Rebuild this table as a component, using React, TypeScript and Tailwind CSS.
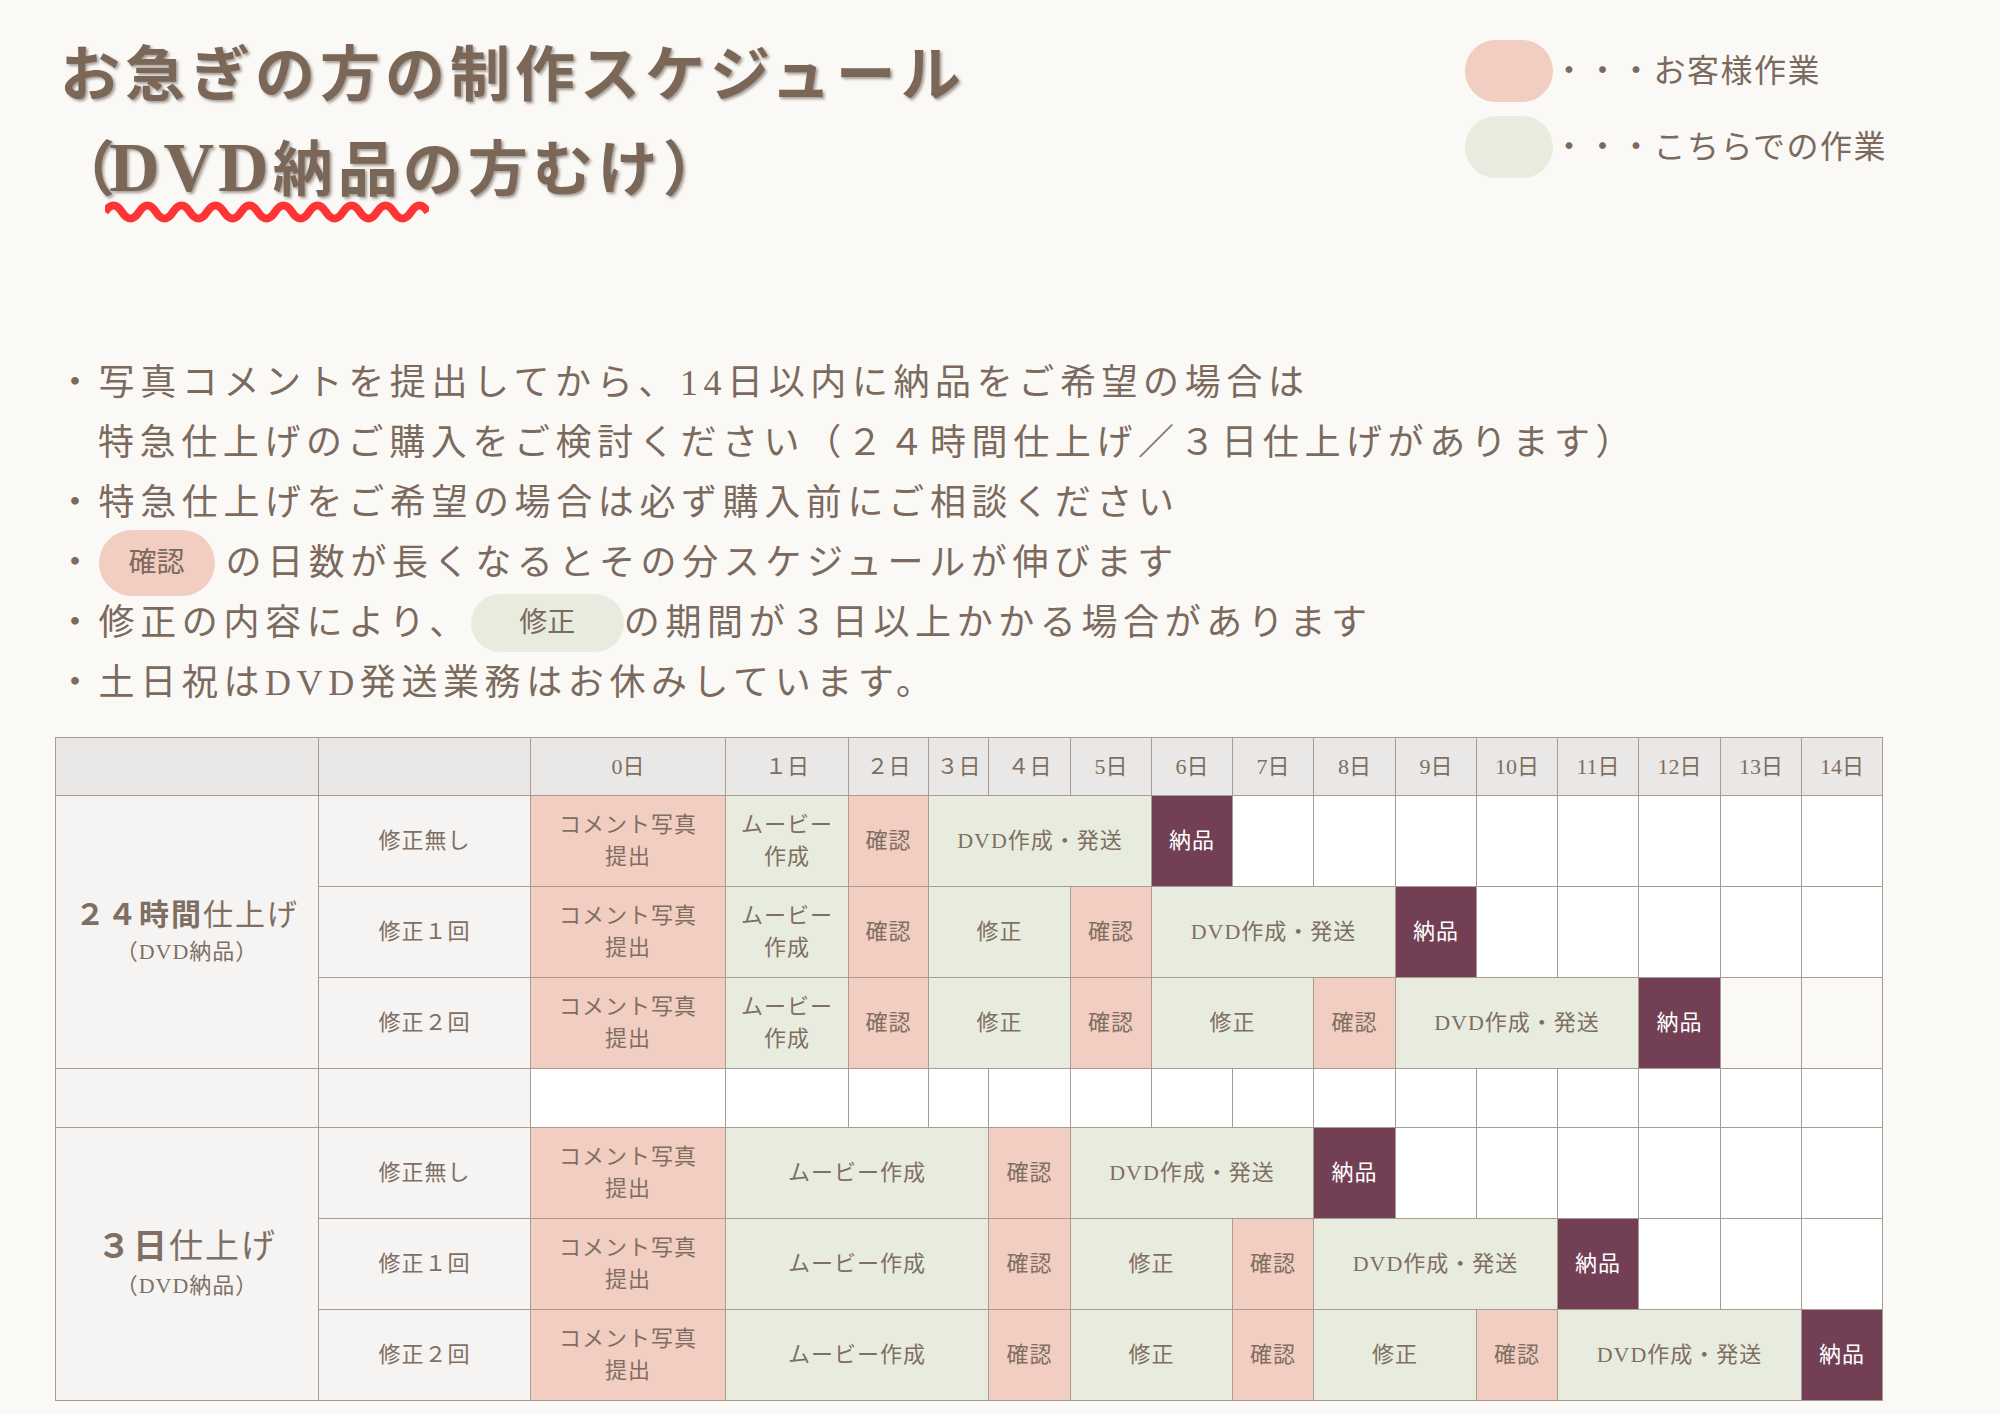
import React from "react";

type Kind = "p" | "g" | "n" | "w" | "t";
type Cell = { k: Kind; span?: number; text?: string[] };

const FONT = "font-['Liberation_Serif','Noto_Sans_CJK_JP',serif]";

const kindClass: Record<Kind, string> = {
  p: "bg-[#f2cdc1] text-[#7f6e62]",
  g: "bg-[#e8ecde] text-[#7f6e62]",
  n: "bg-[#723f54] text-white",
  w: "bg-white",
  t: "bg-transparent",
};

const comment: Cell = { k: "p", text: ["コメント写真", "提出"] };
const movieShort: Cell = { k: "g", text: ["ムービー", "作成"] };
const movieLong: Cell = { k: "g", span: 3, text: ["ムービー作成"] };
const kakunin: Cell = { k: "p", text: ["確認"] };
const shusei: Cell = { k: "g", span: 2, text: ["修正"] };
const nohin: Cell = { k: "n", text: ["納品"] };
const dvd: Cell = { k: "g", span: 3, text: ["DVD作成・発送"] };
const blanks = (n: number, k: Kind = "w"): Cell[] =>
  Array.from({ length: n }, () => ({ k }));

const rows24: [string, Cell[]][] = [
  ["修正無し", [comment, movieShort, kakunin, dvd, nohin, ...blanks(8)]],
  ["修正１回", [comment, movieShort, kakunin, shusei, kakunin, dvd, nohin, ...blanks(5)]],
  [
    "修正２回",
    [comment, movieShort, kakunin, shusei, kakunin, shusei, kakunin, dvd, nohin, ...blanks(2, "t")],
  ],
];

const rows3: [string, Cell[]][] = [
  ["修正無し", [comment, movieLong, kakunin, dvd, nohin, ...blanks(6)]],
  ["修正１回", [comment, movieLong, kakunin, shusei, kakunin, dvd, nohin, ...blanks(3)]],
  ["修正２回", [comment, movieLong, kakunin, shusei, kakunin, shusei, kakunin, dvd, nohin]],
];

const days = ["0日", "１日", "２日", "３日", "４日", "5日", "6日", "7日", "8日", "9日", "10日", "11日", "12日", "13日", "14日"];
const colWidths = [263, 212, 195, 123, 80, 60, 82, 81, 81, 81, 82, 81, 81, 81, 82, 81, 81];

function wavePath() {
  const half = 17;
  let d = "M0 12 Q8.5 -1 17 12";
  for (let x = 2 * half; x <= 330; x += half) d += ` T${x} 12`;
  return d;
}

function Title() {
  return (
    <div className="w-[1405px] shrink-0 pt-[30px] font-bold text-[60px] leading-[92px] tracking-[5px] text-[#7a6757] [text-shadow:2px_2px_3px_rgba(60,40,30,0.45)]">
      <div>お急ぎの方の制作スケジュール</div>
      <div className="whitespace-nowrap -ml-[5px]">
        <span className="tracking-[-6px]">（</span>
        <span className="relative inline-block">
          <span className="text-[70px] tracking-[4px]">DVD</span>納品
          <svg
            className="absolute left-[-4px] top-[78px]"
            width="324"
            height="24"
            viewBox="0 0 324 24"
          >
            <path d={wavePath()} fill="none" stroke="#ff3535" strokeWidth="8" />
          </svg>
        </span>
        の方むけ）
      </div>
    </div>
  );
}

function Legend() {
  return (
    <div className="flex flex-col gap-[14px] pt-[40px]">
      <div className="flex items-center h-[62px]">
        <div className="w-[88px] h-[62px] rounded-[31px] bg-[#f2cdc1]" />
        <span className="text-[32px] tracking-[1.5px] leading-none">・・・お客様作業</span>
      </div>
      <div className="flex items-center h-[62px]">
        <div className="w-[88px] h-[62px] rounded-[31px] bg-[#e8ecde]" />
        <span className="text-[32px] tracking-[1.5px] leading-none">・・・こちらでの作業</span>
      </div>
    </div>
  );
}

function Bullets() {
  const line = "flex items-center h-[60px] whitespace-nowrap";
  return (
    <div className="mt-[136px] pl-[57px] text-[36px] tracking-[5.6px]">
      <div className={line}>・写真コメントを提出してから、14日以内に納品をご希望の場合は</div>
      <div className={line + " pl-[41px]"}>
        特急仕上げのご購入をご検討ください（２４時間仕上げ／３日仕上げがあります）
      </div>
      <div className={line}>・特急仕上げをご希望の場合は必ず購入前にご相談ください</div>
      <div className={line}>
        <span>・</span>
        <span className="flex items-center justify-center w-[116px] h-[66px] shrink-0 rounded-full bg-[#f2cdc1] text-[28px] tracking-normal">
          確認
        </span>
        <span className="ml-[11px]">の日数が長くなるとその分スケジュールが伸びます</span>
      </div>
      <div className={line}>
        <span>・修正の内容により、</span>
        <span className="flex items-center justify-center w-[153px] h-[58px] shrink-0 rounded-full bg-[#e8ecde] text-[28px] tracking-normal">
          修正
        </span>
        <span>の期間が３日以上かかる場合があります</span>
      </div>
      <div className={line}>・土日祝はDVD発送業務はお休みしています。</div>
    </div>
  );
}

function GroupRows({ title, rows }: { title: React.ReactNode; rows: [string, Cell[]][] }) {
  return (
    <>
      {rows.map(([label, cells], i) => (
        <tr key={label} className="h-[91px]">
          {i === 0 && (
            <td rowSpan={3} className="border border-[#a89b92] bg-[#f5f4f2] text-center align-middle">
              {title}
            </td>
          )}
          <td className="border border-[#a89b92] bg-[#f5f4f2] text-center">{label}</td>
          {cells.map((c, j) => (
            <td
              key={j}
              colSpan={c.span}
              className={"border border-[#a89b92] text-center " + kindClass[c.k]}
            >
              {c.text?.map((t) => (
                <div key={t}>{t}</div>
              ))}
            </td>
          ))}
        </tr>
      ))}
    </>
  );
}

function ScheduleTable() {
  return (
    <table className="mt-[24px] ml-[55px] w-[1828px] table-fixed border-collapse text-[22px] leading-[32px] tracking-[1px] text-[#7f6e62]">
      <colgroup>
        {colWidths.map((w, i) => (
          <col key={i} style={{ width: w }} />
        ))}
      </colgroup>
      <tbody>
        <tr className="h-[58px] bg-[#e9e8e6]">
          <td className="border border-[#a89b92]" />
          <td className="border border-[#a89b92]" />
          {days.map((d) => (
            <td key={d} className="border border-[#a89b92] text-center tracking-normal">
              {d}
            </td>
          ))}
        </tr>
        <GroupRows
          title={
            <div>
              <div className="text-[30px] leading-[40px] tracking-[2px]">
                <span className="font-bold">２４時間</span>仕上げ
              </div>
              <div className="text-[22px] leading-[34px]">（DVD納品）</div>
            </div>
          }
          rows={rows24}
        />
        <tr className="h-[59px]">
          <td className="border border-[#a89b92] bg-[#f5f4f2]" />
          <td className="border border-[#a89b92] bg-[#f5f4f2]" />
          {days.map((d) => (
            <td key={d} className="border border-[#a89b92] bg-white" />
          ))}
        </tr>
        <GroupRows
          title={
            <div>
              <div className="text-[34px] leading-[44px] tracking-[2px]">
                <span className="font-bold">３日</span>仕上げ
              </div>
              <div className="text-[22px] leading-[34px]">（DVD納品）</div>
            </div>
          }
          rows={rows3}
        />
      </tbody>
    </table>
  );
}

export default function App() {
  return (
    <div className={"w-[2000px] h-[1414px] overflow-hidden bg-[#faf9f6] text-[#7b6a5d] " + FONT}>
      <div className="flex pl-[60px]">
        <Title />
        <Legend />
      </div>
      <Bullets />
      <ScheduleTable />
    </div>
  );
}
